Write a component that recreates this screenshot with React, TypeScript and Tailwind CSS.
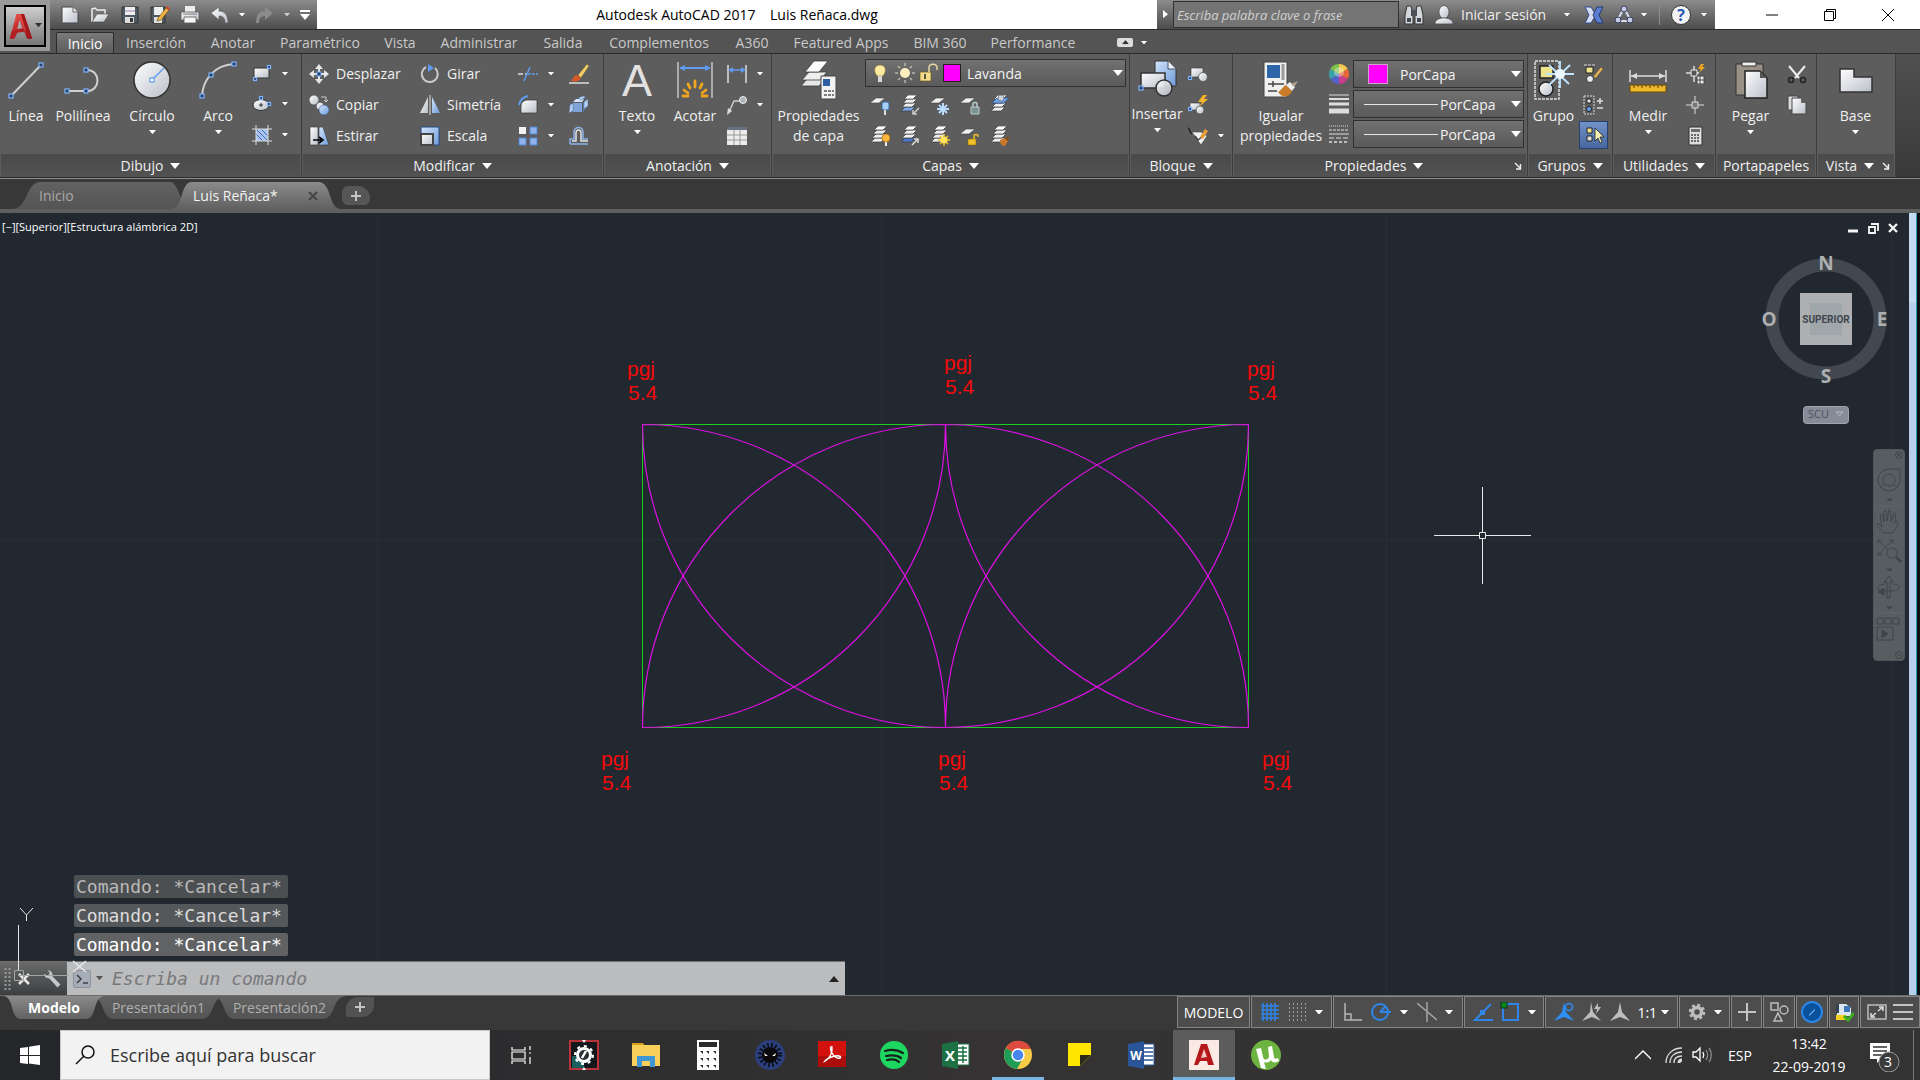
import type { ReactNode } from 'react';

interface IconProps {
  children: ReactNode;
  className?: string;
}

function Icon20({ children, className = 'size-5' }: IconProps) {
  return (
    <svg viewBox="0 0 20 20" fill="none" aria-hidden="true" className={`${className} shrink-0`}>
      {children}
    </svg>
  );
}

function Icon40({ children, className = 'size-10' }: IconProps) {
  return (
    <svg viewBox="0 0 40 40" fill="none" aria-hidden="true" className={`${className} shrink-0`}>
      {children}
    </svg>
  );
}

function Caret({ className = 'w-[7px] text-white' }: { className?: string }) {
  return (
    <svg viewBox="0 0 10 6" aria-hidden="true" className={`${className} shrink-0`}>
      <path d="M0 0h10L5 6z" fill="currentColor" />
    </svg>
  );
}

function Launcher() {
  return (
    <svg viewBox="0 0 8 8" aria-hidden="true" className="size-2 shrink-0">
      <path d="M1 1l5 5M6.500 2v5H2" fill="none" stroke="#eee" strokeWidth="1.400" />
    </svg>
  );
}

// Blue square handle used on most drawing icons
function Grip({ x, y, s = 4 }: { x: number; y: number; s?: number }) {
  return <rect x={x - s / 2} y={y - s / 2} width={s} height={s} fill="#2b3f5c" stroke="#7db2ff" strokeWidth="1.2" />;
}

function GradientDefs() {
  return (
    <svg width="0" height="0" className="absolute" aria-hidden="true">
      <defs>
        <linearGradient id="silver" x1="0" y1="0" x2="1" y2="1">
          <stop offset="0" stopColor="#ffffff" />
          <stop offset="1" stopColor="#b9bec8" />
        </linearGradient>
        <linearGradient id="blueish" x1="0" y1="0" x2="1" y2="1">
          <stop offset="0" stopColor="#d3e4fa" />
          <stop offset="1" stopColor="#6d9bdb" />
        </linearGradient>
        <linearGradient id="tabActive" x1="0" y1="0" x2="0" y2="1">
          <stop offset="0" stopColor="#8b8b8b" />
          <stop offset="1" stopColor="#616161" />
        </linearGradient>
        <linearGradient id="tabIdle" x1="0" y1="0" x2="0" y2="1">
          <stop offset="0" stopColor="#626262" />
          <stop offset="1" stopColor="#545454" />
        </linearGradient>
        <linearGradient id="redA" x1="0" y1="0" x2="1" y2="1">
          <stop offset="0" stopColor="#e8403c" />
          <stop offset="1" stopColor="#94181a" />
        </linearGradient>
      </defs>
    </svg>
  );
}

function AutocadMark({ className }: { className: string }) {
  return (
    <svg viewBox="0 0 32 36" aria-hidden="true" className={className}>
      <path d="M1 35L10 2h10l11 33h-7l-4-10-9 1-4 9z" fill="url(#redA)" />
      <path d="M14 9l4 12-7 1z" fill="#a9a9ab" />
      <path d="M1 35l3-11 17-3 3 4-13 2-4 8z" fill="#b01f22" />
      <path d="M10 2l-3 13 3-2 3-6 8 18h4l-8-23z" fill="#ee5a52" opacity=".5" />
      <path d="M16 2h4l11 33h-5z" fill="#a0181b" />
    </svg>
  );
}

/* ---------- Title bar ---------- */

function QuickAccess() {
  const btn = 'flex w-[30px] shrink-0 justify-center';
  return (
    <div className="flex h-full w-[267px] shrink-0 items-center bg-linear-to-b from-[#8c8c8c] to-[#4d4d4d] pl-[5px]">
      <button aria-label="Nuevo" className={btn}>
        <Icon20><path d="M2 2h11l5 5v11H2z" fill="url(#silver)" stroke="#444" /><path d="M13 2v5h5" fill="#eee" stroke="#666" /></Icon20>
      </button>
      <button aria-label="Abrir" className={btn}>
        <Icon20><path d="M2 17V4l3-1 2 2h8v4" stroke="#eee" strokeWidth="1.5" fill="#777" /><path d="M2 17L7 9h12l-5 8z" fill="url(#silver)" stroke="#444" strokeWidth=".6" /></Icon20>
      </button>
      <button aria-label="Guardar" className={btn}>
        <Icon20><path d="M2 2h16v16H4l-2-2z" fill="#505a64" stroke="#333" /><path d="M5 2h10v8H5z" fill="#eee" /><path d="M5 6h10" stroke="#96a" strokeWidth=".8" /><path d="M5 12h9v6H5z" fill="#ddd" /><path d="M10 13h3v4h-3z" fill="#333" /></Icon20>
      </button>
      <button aria-label="Guardar como" className={btn}>
        <Icon20><path d="M1 2h14v16H3l-2-2z" fill="#505a64" stroke="#333" /><path d="M4 2h9v8H4z" fill="#eee" /><path d="M4 12h8v6H4z" fill="#ddd" /><path d="M8 13l8-10 3 2-8 10-4 1z" fill="#f0b445" stroke="#6b4b14" strokeWidth=".6" /><path d="M16 3l3 2 1-2-3-2z" fill="#d9432f" /></Icon20>
      </button>
      <button aria-label="Trazar" className={btn}>
        <Icon20><path d="M5 1h10v6H5z" fill="#eee" /><path d="M1 7h18v8H1z" fill="url(#silver)" stroke="#555" strokeWidth=".8" /><path d="M4 12h12v6H4z" fill="#f6f6f6" stroke="#555" strokeWidth=".8" /><path d="M3 9h14" stroke="#777" /></Icon20>
      </button>
      <button aria-label="Deshacer" className={btn}>
        <Icon20><path d="M1 8l8-6v4c6 0 9 4 9 12h-3c0-5-2-7-6-7v4z" fill="url(#silver)" stroke="#555" strokeWidth=".6" /></Icon20>
      </button>
      <button aria-label="Lista deshacer" className="flex w-[14px] justify-center"><Caret className="w-[6px] text-white" /></button>
      <button aria-label="Rehacer" className={btn}>
        <Icon20><path d="M19 8l-8-6v4c-6 0-9 4-9 12h3c0-5 2-7 6-7v4z" fill="#8b8b8b" /></Icon20>
      </button>
      <button aria-label="Lista rehacer" className="flex w-4 justify-center"><Caret className="w-[6px] text-[#ccc]" /></button>
      <button aria-label="Personalizar barra" className="flex w-5 flex-col items-center justify-center gap-[2px]">
        <span className="h-[2px] w-[10px] bg-white" />
        <Caret className="w-[10px] text-white" />
      </button>
    </div>
  );
}

function InfoCenter() {
  return (
    <div className="flex h-full w-[558px] shrink-0 items-center bg-linear-to-b from-[#8c8c8c] to-[#4d4d4d]">
      <button aria-label="Contraer búsqueda" className="flex w-4 justify-center">
        <svg viewBox="0 0 6 10" className="w-[5px]"><path d="M0 0l6 5-6 5z" fill="#fff" /></svg>
      </button>
      <input
        aria-label="Buscar"
        placeholder="Escriba palabra clave o frase"
        className="h-[27px] w-[226px] border border-[#303030] bg-[#747474] px-[3px] text-[13px] italic placeholder:text-[#d0d0d0]"
      />
      <button aria-label="Buscar ayuda" className="ml-[5px]">
        <Icon20><path d="M3 1h4l2 9v9H1v-9zM13 1h4l2 9v9h-8v-9z" fill="#d4d8dc" stroke="#333" /><path d="M7 5h6v6H7z" fill="#4a4f55" /><path d="M3 13h4v4H3zM13 13h4v4h-4z" fill="#3f4a52" /></Icon20>
      </button>
      <button className="ml-[10px] flex items-center gap-[7px] text-[14px] text-[#eee]">
        <Icon20><ellipse cx="10" cy="7" rx="5" ry="6.500" fill="url(#silver)" stroke="#444" strokeWidth=".7" /><path d="M1 19c0-4 3-5 7-6h4c4 1 7 2 7 6z" fill="url(#silver)" stroke="#444" strokeWidth=".7" /></Icon20>
        <span className="w-[92px] text-left whitespace-nowrap">Iniciar sesión</span>
      </button>
      <button aria-label="Opciones de sesión" className="flex w-[27px] justify-center"><Caret className="w-[6px] text-white" /></button>
      <button aria-label="Exchange">
        <Icon20 className="ml-1 size-5"><path d="M1 2h6l5 8-5 8H1l4-8z" fill="#d5def2" stroke="#334a8c" /><path d="M19 2h-6l-4 8 4 8h6l-4-8z" fill="#5b7fd0" stroke="#22386e" /></Icon20>
      </button>
      <button aria-label="A360" className="ml-[10px] flex items-center gap-[7px]">
        <Icon20><path d="M10 3l7 13H3z" stroke="#d7dcf0" strokeWidth="2" /><circle cx="10" cy="4" r="3" fill="#c6cce0" stroke="#333c66" /><circle cx="4" cy="15" r="3" fill="#c6cce0" stroke="#333c66" /><circle cx="16" cy="15" r="3" fill="#c6cce0" stroke="#333c66" /></Icon20>
        <Caret className="w-[6px] text-white" />
      </button>
      <span className="ml-3 h-5 w-px bg-[#8d8d8d]" />
      <button aria-label="Ayuda" className="ml-[11px] flex items-center gap-[10px]">
        <span className="flex size-5 items-center justify-center rounded-full border border-[#333] bg-[#f3f3f3] text-[16px] leading-none font-bold text-[#2757b0]">?</span>
        <Caret className="w-[6px] text-white" />
      </button>
    </div>
  );
}

function WindowButtons() {
  const btn = 'flex h-full w-[58px] items-center justify-center';
  return (
    <div className="flex h-full w-[205px] shrink-0 justify-end pr-[3px]">
      <button aria-label="Minimizar" className={btn}><svg viewBox="0 0 12 12" className="size-3"><path d="M0 6h12" stroke="#000" /></svg></button>
      <button aria-label="Restaurar" className={btn}>
        <svg viewBox="0 0 12 12" className="size-3"><path d="M.5 2.500h9v9h-9zM2.500 2.500v-2h9v9h-2" fill="none" stroke="#000" /></svg>
      </button>
      <button aria-label="Cerrar" className={btn}><svg viewBox="0 0 12 12" className="size-3"><path d="M0 0l12 12M12 0L0 12" stroke="#000" /></svg></button>
    </div>
  );
}

const RIBBON_TABS = [
  { label: 'Inserción', width: 'w-[84px]' },
  { label: 'Anotar', width: 'w-[70px]' },
  { label: 'Paramétrico', width: 'w-[104px]' },
  { label: 'Vista', width: 'w-[56px]' },
  { label: 'Administrar', width: 'w-[102px]' },
  { label: 'Salida', width: 'w-[66px]' },
  { label: 'Complementos', width: 'w-[126px]' },
  { label: 'A360', width: 'w-[60px]' },
  { label: 'Featured Apps', width: 'w-[118px]' },
  { label: 'BIM 360', width: 'w-[80px]' },
  { label: 'Performance', width: 'w-[106px]' },
];

function Header() {
  return (
    <header className="flex border-b border-[#2b2b2b] bg-[#545454]">
      <button aria-label="Menú de la aplicación" className="flex h-[51px] w-[50px] shrink-0 items-center justify-center bg-[#9a9a9a]">
        <span className="flex h-[42px] w-[42px] items-center gap-[2px] border-2 border-black bg-linear-to-b from-[#cfcfcf] to-[#777] pl-[3px]">
          <AutocadMark className="h-7 w-6" />
          <Caret className="w-[7px] text-[#333]" />
        </span>
      </button>
      <div className="min-w-0 flex-1">
        <div className="flex h-[30px] border-b border-[#2b2b2b] bg-white">
          <QuickAccess />
          <h1 className="flex-1 text-center text-[14px] leading-[29px] whitespace-pre text-black">
            {'Autodesk AutoCAD 2017    Luis Reñaca.dwg'}
          </h1>
          <InfoCenter />
          <WindowButtons />
        </div>
        <nav className="flex h-[23px] items-end pl-[6px] text-[14px] text-[#c9c9c9]">
          <button className="h-[21px] w-[58px] rounded-t-xs border border-b-0 border-[#2b2b2b] bg-linear-to-b from-[#7a7a7a] to-[#5c5c5c] leading-[19px] text-white">
            Inicio
          </button>
          {RIBBON_TABS.map((tab) => (
            <button key={tab.label} className={`${tab.width} h-[21px] leading-[20px] whitespace-nowrap`}>{tab.label}</button>
          ))}
          <button aria-label="Minimizar cinta" className="ml-[31px] flex h-[21px] items-center">
            <span className="flex h-[9px] w-4 items-center justify-center rounded-xs bg-[#dcdcdc]">
              <Caret className="w-[7px] rotate-180 text-[#333]" />
            </span>
          </button>
          <button aria-label="Opciones de cinta" className="ml-2 flex h-[21px] items-center"><Caret className="w-[6px] text-white" /></button>
        </nav>
      </div>
    </header>
  );
}

/* ---------- Ribbon ---------- */

interface PanelProps {
  title: string;
  width: string;
  arrow?: boolean;
  launcher?: boolean;
  children: ReactNode;
}

function Panel({ title, width, arrow = true, launcher = false, children }: PanelProps) {
  return (
    <section className={`${width} flex shrink-0 flex-col border-r border-[#3c3c3c] bg-[#5d5d5d]`}>
      <div className="flex h-[100px] py-1">{children}</div>
      <div className="flex h-[23px] items-center justify-center border-x border-[#5d5d5d] bg-linear-to-b from-[#4a4a4a] to-[#525252] text-[14px] text-[#f0f0f0]">
        <button className="flex flex-1 items-center justify-center gap-[7px]">
          {title}
          {arrow && <Caret className="w-[10px] text-white" />}
        </button>
        {launcher && <button aria-label={`Opciones de ${title}`} className="mr-1"><Launcher /></button>}
      </div>
    </section>
  );
}

interface BigButtonProps {
  icon: ReactNode;
  label: string;
  width: string;
  arrow?: boolean;
}

function BigButton({ icon, label, width, arrow = false }: BigButtonProps) {
  return (
    <button className={`${width} flex shrink-0 flex-col items-center pt-[2px] text-[14px] leading-[20px] text-[#f0f0f0]`}>
      {icon}
      <span className="mt-[6px] whitespace-pre-line">{label}</span>
      {arrow && <Caret className="mt-1 w-[7px] text-white" />}
    </button>
  );
}

interface SmallButtonProps {
  icon: ReactNode;
  name: string;
  text?: boolean;
  arrow?: boolean;
}

function SmallButton({ icon, name, text = false, arrow = false }: SmallButtonProps) {
  return (
    <button aria-label={name} className="flex h-[31px] items-center text-[14px] whitespace-nowrap text-[#f0f0f0]">
      {icon}
      {text && <span className="ml-[7px]">{name}</span>}
      {arrow && <Caret className="ml-[10px] w-[6px] text-white" />}
    </button>
  );
}

function DrawPanel() {
  return (
    <Panel title="Dibujo" width="w-[302px]">
      <BigButton width="w-[52px]" label="Línea" icon={<Icon40><path d="M5 36L35 5" stroke="#cfcfcf" strokeWidth="2" /><Grip x={5} y={36} /><Grip x={35} y={5} /></Icon40>} />
      <BigButton width="w-[62px]" label="Polilínea" icon={<Icon40><path d="M4 31h20c14 0 14-21 0-21" stroke="#cfcfcf" strokeWidth="2" /><Grip x={4} y={31} /><Grip x={23} y={31} /><Grip x={23} y={10} /></Icon40>} />
      <BigButton width="w-[76px]" label="Círculo" arrow icon={<Icon40><circle cx="20" cy="20" r="18" fill="url(#silver)" stroke="#333" strokeWidth="1.500" /><path d="M20 20L32 8" stroke="#5f9bf0" strokeWidth="1.500" /><rect x="18" y="18" width="4" height="4" fill="#fff" stroke="#5f9bf0" strokeWidth="1.200" /></Icon40>} />
      <BigButton width="w-[56px]" label="Arco" arrow icon={<Icon40><path d="M4 36C5 20 16 5 36 4" stroke="#cfcfcf" strokeWidth="2" /><Grip x={4} y={36} /><Grip x={13} y={15} /><Grip x={36} y={4} /></Icon40>} />
      <div className="ml-[6px] flex flex-col">
        <SmallButton name="Rectángulo" arrow icon={<Icon20><path d="M2 5h15v10H2z" fill="url(#silver)" stroke="#333" /><Grip x={17} y={4} s={3} /><Grip x={3} y={16} s={3} /></Icon20>} />
        <SmallButton name="Elipse" arrow icon={<Icon20><ellipse cx="9" cy="11" rx="8" ry="5.500" fill="url(#silver)" stroke="#333" /><path d="M9 9v4M7 11h4" stroke="#333" /><Grip x={9} y={4} s={3} /><Grip x={17} y={10} s={3} /></Icon20>} />
        <SmallButton name="Sombreado" arrow icon={<Icon20><path d="M4 4h12v12H4z" fill="#a9c4ee" /><path d="M4 9l7 7M4 4l12 12M9 4l7 7" stroke="#3f69b8" /><path d="M4 0v20M16 0v20M0 4h20M0 16h20" stroke="#ddd" /></Icon20>} />
      </div>
    </Panel>
  );
}

function ModifyPanel() {
  return (
    <Panel title="Modificar" width="w-[302px]">
      <div className="ml-[7px] w-[111px]">
        <SmallButton name="Desplazar" text icon={<Icon20><path d="M10 0l4 5h-8zM10 20l4-5h-8zM0 10l5-4v8zM20 10l-5-4v8z" fill="#e5e5e5" /><path d="M10 4v12M4 10h12" stroke="#e5e5e5" strokeWidth="2" /><rect x="8" y="8" width="4" height="4" fill="#24436f" stroke="#7db2ff" /></Icon20>} />
        <SmallButton name="Copiar" text icon={<Icon20><circle cx="5" cy="5" r="4.500" fill="url(#silver)" /><circle cx="11" cy="11" r="4" fill="#e4e8ee" stroke="#5d5d5d" /><circle cx="15" cy="15" r="5" fill="url(#blueish)" stroke="#3a5a8c" strokeWidth=".6" /><path d="M12 2h5v4M15 5l2 2 2-2" stroke="#ccc" /></Icon20>} />
        <SmallButton name="Estirar" text icon={<Icon20><path d="M1 1h8v18H1z" fill="url(#silver)" stroke="#333" strokeWidth=".6" /><path d="M10 1h4l6 18H10z" fill="url(#blueish)" stroke="#333" strokeWidth=".6" /><path d="M4 14h8M10 11l4 3-4 3" stroke="#000" strokeWidth="1.600" /></Icon20>} />
      </div>
      <div className="w-[98px]">
        <SmallButton name="Girar" text icon={<Icon20><path d="M6 3a8 8 0 1 0 9 1" stroke="#c9c9c9" strokeWidth="2" /><path d="M8 0l6 4-6 4z" fill="#5f9bf0" /></Icon20>} />
        <SmallButton name="Simetría" text icon={<Icon20><path d="M8 2v16H0z" fill="url(#silver)" /><path d="M12 2v16h8z" fill="url(#blueish)" /><path d="M10 0v20" stroke="#ddd" /></Icon20>} />
        <SmallButton name="Escala" text icon={<Icon20><path d="M1 1h18v18H1z" fill="url(#blueish)" stroke="#274a86" /><path d="M1 8h12v11H1z" fill="url(#silver)" stroke="#444" strokeWidth="2" /></Icon20>} />
      </div>
      <div className="w-[51px]">
        <SmallButton name="Recortar" arrow icon={<Icon20><path d="M0 10h5M7 10h2" stroke="#ddd" strokeWidth="1.500" /><path d="M10 10h10" stroke="#5f9bf0" strokeWidth="1.500" strokeDasharray="3 1" /><path d="M6 17L12 3" stroke="#5f9bf0" strokeWidth="1.500" /></Icon20>} />
        <SmallButton name="Empalme" arrow icon={<Icon20><path d="M3 18v-6c0-5 3-7 7-7h9v13z" fill="url(#silver)" stroke="#333" strokeWidth=".7" /><path d="M1 10c1-5 4-8 9-9" stroke="#5f9bf0" strokeWidth="2" /></Icon20>} />
        <SmallButton name="Matriz" arrow icon={<Icon20><path d="M1 1h7v7H1z" fill="#f3f3f3" /><path d="M12 1h7v7h-7zM1 12h7v7H1zM12 12h7v7h-7z" fill="#8db3ea" stroke="#5585cc" /></Icon20>} />
      </div>
      <div>
        <SmallButton name="Borrar" icon={<Icon20><path d="M0 19h20" stroke="#ddd" strokeWidth="1.500" /><path d="M9 11L18 0l2 2-8 12z" fill="#f2cf66" stroke="#553" strokeWidth=".5" /><path d="M2 17c2-1 2-6 6-6l4 3c-2 4-6 4-10 3z" fill="#d45a28" /></Icon20>} />
        <SmallButton name="Descomponer" icon={<Icon20><path d="M4 7l3-3h8l-2 3z" fill="#d3e4fa" /><path d="M4 8h9v9H4z" fill="#7ea3d8" /><path d="M14 8l3-3v8l-3 4z" fill="#5b7fb5" /><path d="M1 10l3-2v8l-4 2zM9 3l5-2 3 1-5 3zM15 7l4-3v7l-4 3z" fill="#b7d2f7" stroke="#47618a" strokeWidth=".5" /></Icon20>} />
        <SmallButton name="Desfase" icon={<Icon20><path d="M1 18v-5h4V6c0-6 9-6 9 0v7h5" stroke="#8db3ea" strokeWidth="1.500" /><path d="M1 18h18" stroke="#8db3ea" strokeWidth="1.500" /><path d="M3 15h4V7c0-4 5-4 5 0v8h7" stroke="#e4e4e4" strokeWidth="1.500" /></Icon20>} />
      </div>
    </Panel>
  );
}

function AnnotationPanel() {
  return (
    <Panel title="Anotación" width="w-[168px]">
      <BigButton width="w-[66px]" label="Texto" arrow icon={<Icon40 className="size-10 overflow-visible"><text x="20" y="36" textAnchor="middle" fontSize="45" fill="#e2e2e2" className="font-['Liberation_Sans',Arial,sans-serif]">A</text></Icon40>} />
      <BigButton width="w-[50px]" label="Acotar" icon={<Icon40><path d="M3 2v36M37 2v36" stroke="#c5c5c5" strokeWidth="1.500" /><path d="M5 8h30" stroke="#5f9bf0" strokeWidth="2" /><path d="M4 8l6-3v6zM36 8l-6-3v6z" fill="#5f9bf0" /><path d="M20 21v6M13 24l2 4M27 24l-2 4M9 30l4 3M31 30l-4 3M8 36h5M27 36h5" stroke="#f0a51e" strokeWidth="2.800" strokeLinecap="round" /></Icon40>} />
      <div className="ml-[7px]">
        <SmallButton name="Cota lineal" arrow icon={<Icon20><path d="M1 1v18M19 1v18" stroke="#ddd" strokeWidth="1.500" /><path d="M3 6h14" stroke="#5f9bf0" strokeWidth="1.500" /><path d="M1 6l5-3v6zM19 6l-5-3v6z" fill="#5f9bf0" /></Icon20>} />
        <SmallButton name="Directriz" arrow icon={<Icon20><path d="M2 17l5-11h6" stroke="#ccc" strokeWidth="1.500" /><circle cx="16" cy="5" r="3.500" fill="#aeb4bb" stroke="#eee" /><path d="M0 20l1-7 4 3z" fill="#ddd" /></Icon20>} />
        <SmallButton name="Tabla" icon={<Icon20><path d="M0 1h20v18H0z" fill="#ececec" /><path d="M0 1h20v3H0z" fill="#66727f" /><path d="M0 9h20M0 14h20M7 4v15M13 4v15" stroke="#9a9a9a" /></Icon20>} />
      </div>
    </Panel>
  );
}

function Stack({ tint = '#eeeeee' }: { tint?: string }) {
  return (
    <g stroke="#3d3d3d" strokeWidth=".7">
      <path d="M1 16l4-4h10l-4 4z" fill={tint} />
      <path d="M2 12l4-4h10l-4 4z" fill="#eee" />
      <path d="M3 8l4-4h10l-4 4z" fill="#eee" />
      <path d="M4 4l4-4h9l-4 4z" fill="#fff" />
    </g>
  );
}

function Sheet() {
  return <path d="M0 8l6-5h9l-6 5z" fill="#f0f0f0" stroke="#444" strokeWidth=".6" />;
}

const LAYER_TOOLS: { name: string; art: ReactNode }[] = [
  { name: 'Desactivar', art: <><Sheet /><rect x="12" y="7" width="7" height="8" rx="2" fill="#a9d1f7" stroke="#3a6ba8" /><path d="M15 15v5" stroke="#ddd" strokeWidth="2" /></> },
  { name: 'Aislar', art: <><Stack tint="#7ba7ea" /><path d="M19 13l-6 6M13 15v4h4" stroke="#ccc" strokeWidth="1.500" /></> },
  { name: 'Inutilizar', art: <><Sheet /><path d="M13 8v12M7 14h12M9 10l8 8M17 10l-8 8" stroke="#bcdcff" strokeWidth="2" /></> },
  { name: 'Bloquear', art: <><Sheet /><path d="M11 12h8v7h-8z" fill="#7c9293" stroke="#b9cccc" /><path d="M13 12V9c0-2 4-2 4 0v3" stroke="#b9cccc" strokeWidth="1.500" /></> },
  { name: 'Establecer actual', art: <><Stack /><path d="M2 8l5-5h12l-5 5z" fill="#6ea1ea" stroke="#264b86" strokeWidth=".6" /><circle cx="11" cy="3" r="3" fill="#ccd4dc" stroke="#555" strokeWidth=".6" /></> },
  { name: 'Activar todas', art: <><Stack /><circle cx="16" cy="12" r="4" fill="#ffb93a" stroke="#a05a00" strokeWidth=".6" /><path d="M16 16v4" stroke="#eee" strokeWidth="2" /></> },
  { name: 'Desaislar', art: <><Stack tint="#4a79cc" /><path d="M12 19l6-6M14 13h4v4" stroke="#ddd" strokeWidth="1.500" /></> },
  { name: 'Reutilizar todas', art: <><Stack /><path d="M14 8v12M8 14h12M10 10l8 8M18 10l-8 8" stroke="#f2c21e" strokeWidth="1.500" /><circle cx="14" cy="14" r="3.500" fill="#ffe25a" /></> },
  { name: 'Desbloquear', art: <><Sheet /><path d="M8 13h8v6H8z" fill="#f0c02c" stroke="#8a6400" strokeWidth=".6" /><path d="M14 13v-3c0-2 4-2 4 0v1" stroke="#f0c02c" strokeWidth="1.500" /></> },
  { name: 'Igualar capa', art: <><Stack /><path d="M10 14l5-2 3 3-3 5c-3 0-5-2-5-6z" fill="#c9762b" /><path d="M15 12l4-2-1 5z" fill="#7d4a1c" /></> },
];

function LayersPanel() {
  return (
    <Panel title="Capas" width="w-[358px]">
      <BigButton
        width="w-[93px]"
        label={'Propiedades\nde capa'}
        icon={
          <Icon40>
            <g stroke="#3d3d3d" strokeWidth=".8">
              <path d="M2 26l7-8h18l-7 8z" fill="#e8e8e8" /><path d="M3 20l7-8h18l-7 8z" fill="#eee" /><path d="M6 12l9-11h14l-9 11z" fill="#fff" />
            </g>
            <path d="M22 16h15v23H22z" fill="#f2f2f2" stroke="#444" /><path d="M24 19h7v7h-7z" fill="#2e5fa6" /><path d="M25 31h10M25 35h10" stroke="#555" strokeWidth="1.500" strokeDasharray="3 1" />
          </Icon40>
        }
      />
      <div className="min-w-0 flex-1 pr-[3px]">
        <div className="mt-[1px] flex h-7 items-center border border-[#303030] bg-linear-to-b from-[#717171] to-[#5a5a5a] pl-1">
          <Icon20 className="mr-[5px] size-5"><path d="M7 13C3 8 4 2 10 2s7 6 3 11z" fill="#fbe9a0" stroke="#7a6a2a" strokeWidth=".6" /><path d="M8 13h4v6H8z" fill="#d8d8d8" /></Icon20>
          <Icon20 className="mr-[3px] size-5"><path d="M10 0v20M0 10h20M3 3l14 14M17 3L3 17" stroke="#b6b6a6" strokeWidth="1.500" strokeDasharray="3 14" /><circle cx="10" cy="10" r="5" fill="#fbeec0" /></Icon20>
          <Icon20 className="mr-[5px] size-5"><path d="M2 9h11v9H2z" fill="#f3dc8a" stroke="#6c5a20" strokeWidth=".7" /><path d="M11 9V5c0-5 8-5 8 0v2" stroke="#e6d9a2" strokeWidth="1.500" /><path d="M7 11v5" stroke="#554" strokeWidth="2" /></Icon20>
          <span className="size-[18px] shrink-0 border border-[#222] bg-[#ff00ff]" />
          <select aria-label="Capa actual" className="ml-[6px] flex-1 appearance-none bg-transparent text-[14px] text-[#f3f3f3]">
            <option>Lavanda</option>
          </select>
          <Caret className="mr-[2px] w-[10px] text-white" />
        </div>
        <div className="mt-[2px] grid w-[155px] grid-cols-5 pl-[5px]">
          {LAYER_TOOLS.map((tool) => (
            <SmallButton key={tool.name} name={tool.name} icon={<Icon20>{tool.art}</Icon20>} />
          ))}
        </div>
      </div>
    </Panel>
  );
}

function BlockPanel() {
  return (
    <Panel title="Bloque" width="w-[103px]">
      <BigButton width="w-[54px]" label="Insertar" arrow icon={<Icon40 className="-mb-[2px] size-10"><path d="M18 1h13l8 8v17H18z" fill="url(#blueish)" stroke="#333" /><path d="M31 1v8h8" fill="#eef4ff" stroke="#456" /><path d="M4 13h24v15H4z" fill="url(#silver)" stroke="#333" strokeWidth="1.500" /><circle cx="27" cy="28" r="8" fill="url(#silver)" stroke="#333" strokeWidth="1.500" fillOpacity=".9" /><Grip x={4} y={28} /></Icon40>} />
      <div className="ml-[4px]">
        <SmallButton name="Crear bloque" icon={<Icon20><path d="M3 4h12v9H3z" fill="url(#silver)" stroke="#444" strokeWidth=".7" /><circle cx="15" cy="13" r="4.500" fill="url(#silver)" stroke="#444" strokeWidth=".7" /><Grip x={2} y={14} s={3} /></Icon20>} />
        <SmallButton name="Editar bloque" icon={<Icon20><path d="M2 8h10v7H2z" fill="url(#silver)" stroke="#444" strokeWidth=".7" /><circle cx="12" cy="15" r="4" fill="url(#silver)" stroke="#444" strokeWidth=".7" /><path d="M15 0l-5 7h4l-3 5 9-8h-4l3-4z" fill="#f6b32c" /><Grip x={2} y={14} s={3} /></Icon20>} />
        <SmallButton name="Atributos" arrow icon={<Icon20><path d="M0 2c2 0 1 5 4 6" stroke="#222" strokeWidth="1.500" /><path d="M4 6l9 13 6-9-6-4z" fill="#efefef" stroke="#444" strokeWidth=".6" /><path d="M7 10l3 4 4-3" stroke="#444" strokeWidth="1.500" /><path d="M12 11l5-8 3 2-5 8z" fill="#e59a3b" /></Icon20>} />
      </div>
    </Panel>
  );
}

interface ComboProps {
  label: string;
  swatch?: boolean;
}

function PropertyCombo({ label, swatch = false }: ComboProps) {
  return (
    <div className="flex h-[28px] items-center border border-[#303030] bg-linear-to-b from-[#717171] to-[#5a5a5a] pr-[2px]">
      {swatch ? (
        <span className="mr-3 ml-[14px] size-5 shrink-0 border border-[#c9a6c9] bg-[#ff00ff]" />
      ) : (
        <span className="mr-[2px] ml-[10px] h-px w-[74px] shrink-0 bg-[#e6e6e6]" />
      )}
      <select aria-label={label} className="min-w-0 flex-1 appearance-none bg-transparent text-[14px] text-[#f3f3f3]">
        <option>PorCapa</option>
      </select>
      <Caret className="w-[10px] text-white" />
    </div>
  );
}

function PropertiesPanel() {
  return (
    <Panel title="Propiedades" width="w-[295px]" launcher>
      <BigButton width="w-[96px]" label={'Igualar\npropiedades'} icon={<Icon40><path d="M3 2h23v35H3z" fill="#f0f0f0" stroke="#444" /><path d="M6 5h13v13H6z" fill="#2c66a8" /><path d="M22 4v16" stroke="#999" strokeWidth="3" /><path d="M7 24h16M7 31h9M12 21v6" stroke="#444" strokeWidth="1.500" /><path d="M17 32c3-1 5-6 8-7l6 6c-2 6-9 8-14 1z" fill="#c77c25" /><path d="M25 25l6 6 3-4-5-5z" fill="#eee" /><path d="M30 24l7-3-4 6z" fill="#b5a58e" /></Icon40>} />
      <div className="flex w-[24px] shrink-0 flex-col gap-[2px] pt-[2px]">
        <span className="flex h-7 items-center">
          <svg viewBox="0 0 20 20" className="size-5" aria-hidden="true">
            <path d="M10 10V0A10 10 0 0 1 18.700 5z" fill="#f2c84b" /><path d="M10 10l8.700-5a10 10 0 0 1 0 10z" fill="#e8673a" /><path d="M10 10l8.700 5A10 10 0 0 1 10 20z" fill="#c93d8e" />
            <path d="M10 10v10a10 10 0 0 1-8.700-5z" fill="#5562c9" /><path d="M10 10l-8.700 5a10 10 0 0 1 0-10z" fill="#3aa3a5" /><path d="M10 10L1.300 5A10 10 0 0 1 10 0z" fill="#7cc04a" />
            <circle cx="10" cy="8" r="5" fill="#fff" opacity=".35" />
          </svg>
        </span>
        <span className="flex h-7 items-center"><Icon20><path d="M0 1h20" stroke="#ddd" /><path d="M0 5h20" stroke="#ddd" strokeWidth="2" /><path d="M0 10h20" stroke="#ddd" strokeWidth="3" /><path d="M0 17h20" stroke="#ddd" strokeWidth="5" /></Icon20></span>
        <span className="flex h-7 items-center"><Icon20><path d="M0 2h20" stroke="#ddd" strokeDasharray="1 1" /><path d="M0 6h20" stroke="#ddd" strokeDasharray="3 1" /><path d="M0 10h20" stroke="#ddd" /><path d="M0 14h20" stroke="#ddd" strokeDasharray="5 2" /><path d="M0 18h20" stroke="#ddd" strokeWidth="1.500" strokeDasharray="3 2" /></Icon20></span>
      </div>
      <div className="flex min-w-0 flex-1 flex-col gap-[2px] pt-[2px] pr-[3px]">
        <PropertyCombo label="Color de objeto" swatch />
        <PropertyCombo label="Grosor de línea" />
        <PropertyCombo label="Tipo de línea" />
      </div>
    </Panel>
  );
}

function GroupsPanel() {
  return (
    <Panel title="Grupos" width="w-[85px]">
      <BigButton width="w-[51px]" label="Grupo" icon={<Icon40><path d="M1 1h24v38H1z" stroke="#ddd" strokeWidth="1.500" strokeDasharray="3 1" /><path d="M6 6h13v12H6z" fill="#efe38c" stroke="#222" strokeWidth="1.500" /><circle cx="12" cy="29" r="7" fill="url(#silver)" stroke="#222" strokeWidth="1.500" /><path d="M26 1v27M12 14h28M15 5l20 19M36 5L15 25" stroke="#bfe4ff" strokeWidth="1.800" /><circle cx="26" cy="14" r="5" fill="#eaf7ff" /></Icon40>} />
      <div>
        <div className="pl-1">
          <SmallButton name="Editar grupo" icon={<Icon20><path d="M1 1h12" stroke="#ddd" strokeDasharray="3 1" /><path d="M3 3h7v6H3z" fill="#efe38c" stroke="#222" /><circle cx="7" cy="15" r="3.500" fill="#e8edf2" stroke="#333" /><path d="M10 13l8-10 2 2-7 9z" fill="#e6b45a" stroke="#543" strokeWidth=".5" /></Icon20>} />
          <SmallButton name="Añadir al grupo" icon={<Icon20><path d="M1 1h10v18H1z" stroke="#ddd" strokeDasharray="2 1" /><path d="M4 4h4v4H4z" fill="#eee" stroke="#222" /><circle cx="6" cy="14" r="2.500" fill="#6ea1ea" stroke="#222" /><path d="M14 6h6M17 3v6M14 13h6" stroke="#ddd" strokeWidth="1.500" /></Icon20>} />
        </div>
        <button aria-label="Selección de grupo" className="mt-[1px] flex h-7 w-[29px] items-center justify-center border border-[#26416e] bg-linear-to-b from-[#7293c8] to-[#4767a0]">
          <Icon20><path d="M3 3h5v5H3z" fill="#efe38c" stroke="#222" /><path d="M3 11h5v5H3z" fill="#ddd" stroke="#222" /><path d="M11 3v13l3-3 2 5 2-1-2-5h4z" fill="#f6efb4" stroke="#222" strokeWidth=".8" /></Icon20>
        </button>
      </div>
    </Panel>
  );
}

function RightPanels() {
  return (
    <>
      <Panel title="Utilidades" width="w-[103px]">
        <BigButton width="w-[70px]" label="Medir" arrow icon={<Icon40><path d="M2 10v12M38 10v12" stroke="#ddd" strokeWidth="1.500" /><path d="M3 16h34" stroke="#ddd" strokeWidth="1.500" /><path d="M3 16l6-3v6zM37 16l-6-3v6z" fill="#ddd" /><path d="M2 25h36v7H2z" fill="#efb92e" stroke="#6b4a08" /><path d="M6 25v3M10 25v2M14 25v3M18 25v2M22 25v3M26 25v2M30 25v3M34 25v2" stroke="#5a3f08" /></Icon40>} />
        <div className="ml-[2px]">
          <SmallButton name="Selección rápida" icon={<Icon20><path d="M9 2v16M1 9h13" stroke="#ddd" strokeWidth="1.500" /><path d="M6 6h6v6H6z" fill="#555" stroke="#eee" /><path d="M12 12h7v8h-7z" fill="#eee" stroke="#444" /><path d="M15 12v8M12 16h7" stroke="#444" /><path d="M16 0l-3 5h3l-2 4 6-6h-3l2-3z" fill="#f6a81c" /></Icon20>} />
          <SmallButton name="Punto" icon={<Icon20><path d="M10 1v18M1 10h18" stroke="#ddd" /><path d="M7 7h6v6H7z" fill="#777" stroke="#ddd" /></Icon20>} />
          <SmallButton name="Calculadora" icon={<Icon20><path d="M4 1h13v18H4z" fill="#ddd" stroke="#333" /><path d="M6 3h9v3H6z" fill="#6b6b6b" /><path d="M6 9h9M6 12h9M6 15h9" stroke="#444" strokeWidth="1.500" strokeDasharray="2 1" /></Icon20>} />
        </div>
      </Panel>
      <Panel title="Portapapeles" width="w-[101px]" arrow={false}>
        <BigButton width="w-[69px]" label="Pegar" arrow icon={<Icon40><path d="M5 4h27v31H5z" fill="#9a9186" stroke="#333" /><path d="M11 2h14v4H11z" fill="#eee" stroke="#333" /><path d="M14 11h15l7 7v20H14z" fill="url(#silver)" stroke="#222" strokeWidth="1.500" /><path d="M29 11v7h7" fill="#555" /></Icon40>} />
        <div className="ml-[2px]">
          <SmallButton name="Cortar" icon={<Icon20><path d="M2 2l10 12M18 2L8 14" stroke="#ececec" strokeWidth="2" /><circle cx="4" cy="16" r="2.500" stroke="#222" strokeWidth="1.600" /><circle cx="16" cy="16" r="2.500" stroke="#222" strokeWidth="1.600" /></Icon20>} />
          <SmallButton name="Copiar al portapapeles" icon={<Icon20><path d="M1 1h10v14H1z" fill="#ddd" stroke="#444" /><path d="M5 3h9l5 5v11H5z" fill="url(#silver)" stroke="#444" /><path d="M14 3v5h5" fill="#666" /></Icon20>} />
        </div>
      </Panel>
      <Panel title="Vista" width="w-[79px]" launcher>
        <BigButton width="w-[77px]" label="Base" arrow icon={<Icon40><path d="M4 9h14v8h18v15H4z" fill="url(#silver)" stroke="#333" strokeWidth="1.500" /></Icon40>} />
      </Panel>
    </>
  );
}

/* ---------- File tabs ---------- */

function FileTabs() {
  return (
    <div className="flex h-[35px] items-end border-t border-b-4 border-t-[#8d8d8d] border-b-[#5f5f5f] bg-[#383838] pl-3 text-[14px]">
      <button className="relative h-[27px] w-[176px] pl-[27px] text-left text-[#a9a9a9]">
        <svg viewBox="0 0 176 27" preserveAspectRatio="none" className="absolute inset-0 size-full" aria-hidden="true">
          <path d="M0 27C16 27 14 0 28 0H158C166 0 168 20 176 27z" fill="url(#tabIdle)" />
        </svg>
        <span className="relative">Inicio</span>
      </button>
      <div className="relative -ml-[16px] flex h-[27px] w-[168px] items-center pl-[21px] text-[#f3f3f3]">
        <svg viewBox="0 0 168 27" preserveAspectRatio="none" className="absolute inset-0 size-full" aria-hidden="true">
          <path d="M0 27C12 25 8 0 20 0H146C160 0 156 25 168 27z" fill="url(#tabActive)" />
        </svg>
        <button className="relative w-[115px] text-left">Luis Reñaca*</button>
        <button aria-label="Cerrar dibujo" className="relative">
          <svg viewBox="0 0 10 10" className="size-[10px]"><path d="M1 1l8 8M9 1L1 9" stroke="#464646" strokeWidth="2" /></svg>
        </button>
      </div>
      <button aria-label="Nuevo dibujo" className="mb-1 ml-[2px] flex h-[19px] w-[28px] items-center justify-center rounded-tl-md rounded-tr-xl rounded-b-md bg-[#565656]">
        <svg viewBox="0 0 10 10" className="size-[10px]"><path d="M5 0v10M0 5h10" stroke="#c4c4c4" strokeWidth="2" /></svg>
      </button>
    </div>
  );
}

/* ---------- Drawing area ---------- */

const NOTES = [
  { x: 627, y: 376 },
  { x: 944, y: 370 },
  { x: 1247, y: 376 },
  { x: 601, y: 766 },
  { x: 938, y: 766 },
  { x: 1262, y: 766 },
];

const R = 303;
const TOP = 424.5;
const BOTTOM = TOP + R;

function tileArcs(x: number) {
  const right = x + R;
  return [
    `M${x} ${TOP}A${R} ${R} 0 0 1 ${right} ${BOTTOM}`,
    `M${x} ${BOTTOM}A${R} ${R} 0 0 1 ${right} ${TOP}`,
    `M${x} ${TOP}A${R} ${R} 0 0 0 ${right} ${BOTTOM}`,
    `M${x} ${BOTTOM}A${R} ${R} 0 0 0 ${right} ${TOP}`,
  ].join('');
}

function Drawing() {
  return (
    <svg viewBox="0 213 1909 782" preserveAspectRatio="xMinYMin meet" className="absolute inset-0 size-full" fill="none">
      <path d="M377.500 213V995M881.500 213V995M1386.500 213V995M1891.500 213V995M0 539.500H1909" stroke="#262e37" />
      <rect x="642.5" y="424.5" width="606" height="303" stroke="#1ad01e" />
      <path d={tileArcs(642.5) + tileArcs(945.5)} stroke="#dc10e2" strokeWidth="1.2" />
      {NOTES.map((note) => (
        <text key={`${note.x}-${note.y}`} fill="#f40a0a" fontSize="21" className="font-['Liberation_Sans',Arial,sans-serif]">
          <tspan x={note.x} y={note.y}>pgj</tspan>
          <tspan x={note.x + 1} y={note.y + 24}>5.4</tspan>
        </text>
      ))}
      <path d="M1434 535.500h45M1486 535.500h45M1482.500 487v45M1482.500 539v45M1479.500 532.500h6v6h-6z" stroke="#e8e8e8" />
    </svg>
  );
}

function ViewCube() {
  return (
    <svg viewBox="1750 240 150 190" className="absolute top-[27px] right-[9px] h-[190px] w-[150px]" fill="none">
      <circle cx="1826" cy="319" r="54" stroke="#42484f" strokeWidth="13" />
      <rect x="1800" y="293" width="52" height="52" fill="#adafb0" />
      <rect x="1810" y="303" width="32" height="32" fill="#a0a7ab" />
      <text x="1826" y="323" textAnchor="middle" fontSize="10" fontWeight="700" fill="#3f464d" className="font-[Roboto,sans-serif]">SUPERIOR</text>
      <g textAnchor="middle" fontSize="19" fontWeight="700" fill="#acaeb0">
        <text x="1826" y="270">N</text>
        <text x="1826" y="383">S</text>
        <text x="1769" y="326">O</text>
        <text x="1882" y="326">E</text>
      </g>
      <rect x="1803.5" y="406.5" width="45" height="17" rx="3" fill="#868b98" stroke="#a0a4ae" />
      <text x="1808" y="418" fontSize="11" fill="#4b505b">SCU</text>
      <path d="M1836 412h7l-3.500 4z" stroke="#b9bcc6" />
    </svg>
  );
}

function NavBar() {
  return (
    <div className="absolute top-[236px] right-1 h-[212px] w-8 rounded-sm border border-[#50565b] bg-[#585d61]">
      <svg viewBox="0 0 30 210" fill="none" stroke="#3f4549" className="size-full" strokeWidth="1">
        <circle cx="25" cy="5" r="3.5" /><path d="M23 3l4 4M27 3l-4 4" />
        <path d="M15 19h11v11a11 11 0 1 1-11-11z" /><circle cx="15" cy="30" r="6" /><path d="M11 34l-4 3M19 34l4 3" />
        <path d="M13 49h5l-2.500 2z" fill="#3f4549" />
        <path d="M2 56h26" stroke="#62676b" />
        <path d="M9 83c-2-4-6-6-6-9 2-1 4 2 5 3L6 65c2-2 3 0 4 7V61c2-1 3 0 3 10l2-11c2 0 2 2 2 12l3-9c3 0 1 6 0 10l3-2c3 0-1 9-5 12z" />
        <path d="M4 90l15 15M19 90L4 105M4 94v-4h4M15 90h4v4M4 101v4h4" /><circle cx="18" cy="103" r="5" fill="#585d61" /><path d="M22 107l5 5" strokeWidth="2.500" />
        <path d="M13 119h5l-2.500 2z" fill="#3f4549" />
        <path d="M13 148v-16h-3l5-6 4 6h-3v16z" /><path d="M11 134c-9 1-10 5-2 7h11c8-2 7-6-1-7" /><path d="M4 142l6-4v7z" fill="#3f4549" />
        <path d="M13 157h5l-2.500 2z" fill="#3f4549" />
        <path d="M2 163h26" stroke="#62676b" />
        <path d="M3 168h6v6H3zM11 168h6v6h-6zM19 168h6v6h-6zM3 177h16v13H3z" /><path d="M8 180l6 4-6 4z" fill="#3f4549" />
        <circle cx="25" cy="205" r="3.500" /><path d="M23 205h4" />
      </svg>
    </div>
  );
}

const HISTORY = [
  { id: 1, tone: 'bg-[#4c4f51] text-[#b9b9b9]' },
  { id: 2, tone: 'bg-[#55585a] text-[#dcdcdc]' },
  { id: 3, tone: 'bg-[#606264] text-white' },
];

function CommandLine() {
  return (
    <div className="absolute bottom-0 left-0 w-[845px] font-['DejaVu_Sans_Mono',monospace] text-[18px]">
      <ol className="mb-[5px] ml-[74px] flex flex-col items-start gap-[6px]">
        {HISTORY.map((line) => (
          <li key={line.id} className={`${line.tone} h-[23px] rounded-xs pr-[6px] pl-[2px] leading-[23px]`}>Comando: *Cancelar*</li>
        ))}
      </ol>
      <div className="flex h-[34px] border-t border-[#707070] bg-[#bbbcbe]">
        <div className="flex w-[67px] items-center bg-linear-to-b from-[#6a6a6a] to-[#3c3f41]">
          <svg viewBox="0 0 8 22" className="ml-1 h-[22px] w-2" aria-hidden="true">
            <path d="M1.500 0v22M5.500 0v22" stroke="#999" strokeWidth="2" strokeDasharray="2 2" />
          </svg>
          <button aria-label="Cerrar línea de comando" className="ml-[6px]">
            <svg viewBox="0 0 12 12" className="size-3"><path d="M1 1l10 10M11 1L1 11" stroke="#e8e8e8" strokeWidth="2.500" /></svg>
          </button>
          <button aria-label="Personalizar" className="ml-[13px]">
            <svg viewBox="0 0 20 20" className="size-[18px]"><path d="M1 3l4 3 2-3-3-3c5-1 8 3 7 7l9 9-4 4-9-10C3 10 0 7 1 3z" fill="#c4c7ca" stroke="#444" /></svg>
          </button>
        </div>
        <label htmlFor="command" className="flex items-center pl-[6px]">
          <span className="flex h-[18px] w-[18px] items-center justify-center rounded-xs border border-[#8d939c] bg-[#a6adb8]">
            <svg viewBox="0 0 14 14" className="size-[14px]"><path d="M2 3l4 4-4 4M8 11h5" stroke="#3b3f44" strokeWidth="1.500" fill="none" /></svg>
          </span>
          <Caret className="ml-[5px] w-[7px] text-[#555]" />
        </label>
        <input
          id="command"
          placeholder="Escriba un comando"
          className="ml-[9px] min-w-0 flex-1 bg-transparent italic placeholder:text-[#77787a]"
        />
        <button aria-label="Historial" className="mr-[6px]"><Caret className="w-[10px] rotate-180 text-[#222]" /></button>
      </div>
    </div>
  );
}

function UcsIcon() {
  return (
    <svg viewBox="0 0 100 90" className="pointer-events-none absolute bottom-0 left-0 h-[90px] w-[100px]" fill="none" stroke="#e6e6e6" aria-hidden="true">
      <path d="M20 3l6.500 7 6.500-7M26.500 10v6M18.500 20v46" />
      <path d="M14.500 65.500h9v10h-9zM18.500 70.500H69" stroke="#a3a5a6" />
      <path d="M73 56l13 11M86 56L73 67" strokeWidth="1.500" />
    </svg>
  );
}

function Canvas() {
  return (
    <main className="relative flex min-h-[600px] flex-1 justify-end bg-[#212830]">
      <div className="relative min-w-0 flex-1 overflow-hidden">
        <Drawing />
        <button className="absolute top-[5px] left-[2px] text-[11px] leading-[17px] text-white">[−][Superior][Estructura alámbrica 2D]</button>
        <div className="absolute top-[10px] right-[10px] flex gap-[9px]">
          <button aria-label="Minimizar dibujo"><svg viewBox="0 0 11 11" className="size-[11px]"><path d="M0 8h10" stroke="#f4f4f4" strokeWidth="3" /></svg></button>
          <button aria-label="Restaurar dibujo"><svg viewBox="0 0 11 11" className="size-[11px]"><path d="M1 4h6v6H1zM3 1h7v7" fill="none" stroke="#f4f4f4" strokeWidth="1.800" /></svg></button>
          <button aria-label="Cerrar ventana"><svg viewBox="0 0 11 11" className="size-[11px]"><path d="M1 1l8 8M9 1L1 9" stroke="#f4f4f4" strokeWidth="2.400" /></svg></button>
        </div>
        <ViewCube />
        <NavBar />
        <CommandLine />
        <UcsIcon />
      </div>
      <div className="flex w-[11px] shrink-0 bg-[#0c0f12]">
        <div className="flex w-2 flex-col border-r border-[#2f9fb0] bg-[#b7cfea]"><span className="h-[90px] bg-[#c6dbf2]" /></div>
      </div>
    </main>
  );
}

/* ---------- Status bar ---------- */

function LayoutTab({ label, width, active = false }: { label: string; width: string; active?: boolean }) {
  return (
    <button className={`${width} relative -ml-3 h-[23px] text-[14px] leading-[22px] ${active ? 'z-10 font-bold text-white' : 'text-[#b0b0b0]'}`}>
      <svg viewBox="0 0 120 23" preserveAspectRatio="none" className="absolute inset-0 size-full" aria-hidden="true">
        <path d="M0 0C12 2 8 23 20 23H98C112 23 106 2 120 0z" fill={active ? 'url(#tabActive)' : 'url(#tabIdle)'} />
      </svg>
      <span className="relative">{label}</span>
    </button>
  );
}

function StatusGroup({ width, children }: { width: string; children: ReactNode }) {
  return (
    <div className={`${width} flex h-8 shrink-0 items-center justify-evenly border border-[#858585] bg-[#4d4d4d]`}>{children}</div>
  );
}

function StatusBar() {
  return (
    <div className="flex h-[35px] border-t border-[#6b6b6b] bg-[#383838]">
      <div className="flex flex-1 pl-4">
        <LayoutTab label="Modelo" width="w-[100px]" active />
        <LayoutTab label="Presentación1" width="w-[133px]" />
        <LayoutTab label="Presentación2" width="w-[133px]" />
        <button aria-label="Nueva presentación" className="mt-[1px] flex h-5 w-7 items-center justify-center rounded-tl-xl rounded-br-xl rounded-bl-xs bg-[#525252]">
          <svg viewBox="0 0 10 10" className="size-[10px]"><path d="M5 0v10M0 5h10" stroke="#c4c4c4" strokeWidth="2" /></svg>
        </button>
      </div>
      <div className="flex gap-px text-[14px] text-white">
        <StatusGroup width="w-[73px]"><button>MODELO</button></StatusGroup>
        <StatusGroup width="w-[81px]">
          <button aria-label="Rejilla"><Icon20><path d="M3 1v18M7 1v18M11 1v18M15 1v18M1 4h18M1 8h18M1 12h18M1 16h18" stroke="#2d86e8" strokeWidth="1.500" /></Icon20></button>
          <button aria-label="Forzar cursor"><Icon20><path d="M1 2h18M1 6h18M1 10h18M1 14h18M1 18h18" stroke="#b5b5b5" strokeWidth="1.500" strokeDasharray="1 3" /></Icon20></button>
          <button aria-label="Ajustes de forzado"><Caret className="w-2" /></button>
        </StatusGroup>
        <StatusGroup width="w-[130px]">
          <button aria-label="Orto"><Icon20><path d="M2 1v17h17M2 12h6v6" stroke="#b5b5b5" strokeWidth="1.500" /></Icon20></button>
          <button aria-label="Rastreo polar"><Icon20><circle cx="9" cy="10" r="8" stroke="#2d86e8" strokeWidth="2" /><path d="M9 10h11M9 10l6-6" stroke="#2d86e8" strokeWidth="2" /></Icon20></button>
          <button aria-label="Ajustes polares"><Caret className="w-2" /></button>
          <button aria-label="Dibujo isométrico"><Icon20><path d="M10 0v20M0 1l20 17" stroke="#a5a5a5" strokeWidth="1.500" /></Icon20></button>
          <button aria-label="Isoplanos"><Caret className="w-2" /></button>
        </StatusGroup>
        <StatusGroup width="w-[80px]">
          <button aria-label="Rastreo de referencia"><Icon20><path d="M18 2L2 18h18" stroke="#2d86e8" strokeWidth="2" /><path d="M7 8h5v5H7z" fill="#2d86e8" /></Icon20></button>
          <button aria-label="Referencia a objetos"><Icon20><path d="M3 2h15v16H3z" stroke="#2d86e8" strokeWidth="2" /><rect x="1" y="0" width="6" height="6" fill="#0c8a16" stroke="#032" /></Icon20></button>
          <button aria-label="Ajustes de referencia"><Caret className="w-2" /></button>
        </StatusGroup>
        <StatusGroup width="w-[133px]">
          <button aria-label="Objetos de anotación"><Icon20><path d="M10 0l2 10 8 9-10-4-10 4 8-9z" fill="#2d8ff5" /><circle cx="15" cy="5" r="3.500" stroke="#2d8ff5" strokeWidth="1.500" /></Icon20></button>
          <button aria-label="Escalas automáticas"><Icon20><path d="M9 0l2 10 8 9-9-4-10 4 8-9z" fill="#bdbdbd" /><path d="M16 1l-4 6h3l-1 5 5-7h-3z" fill="#bdbdbd" /></Icon20></button>
          <button aria-label="Escala de anotación"><Icon20><path d="M10 0l2 10 8 9-10-4-10 4 8-9z" fill="#bdbdbd" /></Icon20></button>
          <button className="flex items-center gap-1">1:1<Caret className="w-2" /></button>
        </StatusGroup>
        <StatusGroup width="w-[51px]">
          <button aria-label="Espacio de trabajo"><Icon20><circle cx="10" cy="10" r="4.500" stroke="#bdbdbd" strokeWidth="3.500" /><circle cx="10" cy="10" r="7" stroke="#bdbdbd" strokeWidth="2.500" strokeDasharray="3 2.500" /></Icon20></button>
          <button aria-label="Lista de espacios"><Caret className="w-2" /></button>
        </StatusGroup>
        <StatusGroup width="w-[31px]"><button aria-label="Monitor de anotación"><Icon20><path d="M10 1v18M1 10h18" stroke="#c4c4c4" strokeWidth="2" /></Icon20></button></StatusGroup>
        <StatusGroup width="w-[32px]"><button aria-label="Aislar objetos"><Icon20><path d="M2 1h7v7H2zM9 11l4 8H5z" stroke="#bdbdbd" strokeWidth="1.500" /><circle cx="15" cy="8" r="4" stroke="#bdbdbd" strokeWidth="1.500" /></Icon20></button></StatusGroup>
        <StatusGroup width="w-[32px]"><button aria-label="Rendimiento de gráficos" className="flex size-[22px] items-center justify-center rounded-full border-2 border-[#2d86e8] bg-[#0a529c]"><span className="h-px w-2 -rotate-45 bg-[#7dbcff]" /></button></StatusGroup>
        <StatusGroup width="w-[30px]"><button aria-label="Normas"><Icon20><path d="M3 2h9l5 4v8H3z" fill="#dce6ee" /><path d="M10 4h6v6h-6z" fill="#3a76b8" /><path d="M2 13h10v5H2z" fill="#f2cf1f" /><path d="M2 2h3v9H2z" fill="#345" /><path d="M10 14l4 4 6-7" stroke="#3bb01f" strokeWidth="3" /></Icon20></button></StatusGroup>
        <StatusGroup width="w-[60px]">
          <button aria-label="Pantalla limpia"><Icon20><path d="M1 3h18v14H1z" stroke="#bdbdbd" strokeWidth="1.500" /><path d="M11 9l5-4M12 5h4v4M9 11l-5 4M4 11v4h4" stroke="#ddd" strokeWidth="1.500" /></Icon20></button>
          <button aria-label="Personalización"><Icon20><path d="M0 3h20M0 10h20M0 17h20" stroke="#c4c4c4" strokeWidth="2" /></Icon20></button>
        </StatusGroup>
      </div>
    </div>
  );
}

/* ---------- Taskbar ---------- */

const TASKS: { name: string; cell?: string; art: ReactNode }[] = [
  { name: 'Vista de tareas', art: <path d="M5 7v3h13V7M5 24v-3h13v3M5 12h13v7H5zM23 6v4M23 17v7M22 13h2" fill="none" stroke="#fff" strokeWidth="1.2" /> },
  { name: 'Optimizador', art: <><path d="M1 1h28v28H1z" fill="#14171b" stroke="#b8323a" strokeWidth="2" /><path d="M3 16h12v12H3z" fill="#1fa6a0" opacity=".5" /><circle cx="15" cy="15" r="6.500" fill="#2a2f33" stroke="#fff" strokeWidth="3" /><circle cx="15" cy="15" r="9" fill="none" stroke="#fff" strokeWidth="2" strokeDasharray="3 4" /><path d="M13 18l4-7" stroke="#fff" strokeWidth="2.500" /><path d="M13 0h4l-2 3zM13 30h4l-2-3z" fill="#fff" /></> },
  { name: 'Explorador', art: <><path d="M1 3h11l2 3H1z" fill="#d9a017" /><path d="M1 5h28v21H1z" fill="#f8cf5a" /><path d="M6 27V16h18v11h-5v-6h-8v6z" fill="#3f97d6" /></> },
  { name: 'Calculadora', art: <><path d="M4 0h22v30H4z" fill="#fff" /><path d="M6 2h18v5H6z" fill="#2b2b2b" /><path d="M7 11h3v3zM13 11h3v3zM20 11h3v3zM7 18h3v3zM13 18h3v3zM20 18h3v3zM7 25h3v3zM13 25h3v3zM20 25h3v3z" fill="#2b2b2b" /></> },
  { name: 'Antimalware', art: <><circle cx="15" cy="15" r="15" fill="#2a3f7c" /><circle cx="15" cy="15" r="8" fill="#0a0a0c" /><circle cx="15" cy="15" r="10" fill="none" stroke="#0a0a0c" strokeWidth="4" strokeDasharray="1.500 2.500" /><path d="M9 13l4 3h-3zM21 13l-4 3h3z" fill="#fff" /></> },
  { name: 'Acrobat', art: <><path d="M1 1h28v26H1z" fill="#d3120e" /><path d="M1 16h28v11H1z" fill="#8f0a08" opacity=".6" /><path d="M8 21c4-2 8-8 7-14-2-1-2 2 0 6s6 6 8 5-1-3-5-2-8 2-10 5z" fill="none" stroke="#fff" strokeWidth="1.400" /></> },
  { name: 'Spotify', art: <><circle cx="15" cy="15" r="14" fill="#1ed760" /><path d="M6 11c6-2 13-1 18 2M7 16c5-1 11-1 15 2M8 20c4-1 9-1 12 2" fill="none" stroke="#16211a" strokeWidth="2.200" strokeLinecap="round" /></> },
  { name: 'Excel', art: <><path d="M15 4h13v21H15z" fill="#fff" stroke="#1e7145" /><path d="M17 8h9M17 12h9M17 16h9M17 20h9M22 6v17" stroke="#1e7145" strokeWidth="1.500" /><path d="M1 4l16-3v28L1 26z" fill="#1e7145" /><text x="9" y="21" textAnchor="middle" fontSize="15" fontWeight="700" fill="#fff">X</text></> },
  { name: 'Chrome', cell: 'chrome', art: <><circle cx="15" cy="15" r="14" fill="#f8cb46" /><path d="M15 15L3 8a14 14 0 0 0 11 21l6-11z" fill="#1f9d58" /><path d="M3 8a14 14 0 0 1 25 1H15v6z" fill="#dd4b3e" /><circle cx="15" cy="15" r="6" fill="#4a84ee" stroke="#fff" strokeWidth="1.500" /></> },
  { name: 'Notas', art: <><path d="M3 3h23v23H3z" fill="#ffe500" /><path d="M15 26V15h11z" fill="#2a2a1a" /><path d="M26 15v11H15z" fill="#343332" /></> },
  { name: 'Word', art: <><path d="M15 4h12v21H15z" fill="#fff" stroke="#2a5699" /><path d="M17 8h9M17 12h9M17 16h9M17 20h9" stroke="#2a5699" strokeWidth="1.500" /><path d="M1 4l16-3v28L1 26z" fill="#2a5699" /><text x="9" y="20" textAnchor="middle" fontSize="12" fontWeight="700" fill="#fff">W</text></> },
  { name: 'AutoCAD', cell: 'autocad', art: <><path d="M0 0h30v30H0z" fill="#fbe9e4" /><path d="M5 25L12 4h6l7 21h-6l-1-4h-7l-2 4z" fill="#b5171b" /><path d="M15 9l3 8-6 1z" fill="#f3c9c4" /></> },
  { name: 'uTorrent', art: <><circle cx="15" cy="15" r="15" fill="#6db33f" /><path d="M5 9l5-1 2 9c1 4 6 3 6-1l-1-9 4-1 2 11c0 2 2 2 4 1l1 3c-3 2-7 2-8-1-2 3-5 3-7 2l2 7-5-1z" fill="#fff" /></> },
];

function Taskbar() {
  return (
    <footer className="flex h-[50px] items-center bg-linear-to-r from-[#24262a] via-[#343232] to-[#333333] text-white">
      <button aria-label="Inicio de Windows" className="flex w-[60px] shrink-0 justify-center">
        <svg viewBox="0 0 20 20" className="size-5"><path d="M0 3l8-1v8H0zM9 1.800L20 0v10H9zM0 11h8v8l-8-1zM9 11h11v9L9 18.500z" fill="#fff" /></svg>
      </button>
      <label className="flex h-[50px] w-[430px] shrink-0 items-center border border-[#c9c9c9] bg-[#f2f2f2] pl-[14px]">
        <svg viewBox="0 0 20 20" className="size-5 shrink-0"><circle cx="13" cy="7" r="6" fill="none" stroke="#111" strokeWidth="1.500" /><path d="M9 11l-8 8" stroke="#111" strokeWidth="1.500" /></svg>
        <input
          aria-label="Buscar en Windows"
          placeholder="Escribe aquí para buscar"
          className="ml-[15px] min-w-0 flex-1 bg-transparent text-[18px] placeholder:text-[#333]"
        />
      </label>
      <div className="flex h-full flex-1 pl-px">
        {TASKS.map((task) => (
          <button
            key={task.name}
            aria-label={task.name}
            className={`flex h-full w-[62px] flex-col items-center justify-between pt-[10px] ${task.cell === 'autocad' ? 'bg-[#5c5c5c]' : ''}`}
          >
            <svg viewBox="0 0 30 30" className="size-[30px]">{task.art}</svg>
            {task.cell && <span className={`h-[3px] bg-[#76b5e4] ${task.cell === 'autocad' ? 'w-full' : 'w-[52px]'}`} />}
          </button>
        ))}
      </div>
      <div className="flex h-full shrink-0 items-center pr-[6px] text-[14px]">
        <button aria-label="Iconos ocultos"><svg viewBox="0 0 16 10" className="h-[10px] w-4"><path d="M0 9l8-8 8 8" fill="none" stroke="#fff" strokeWidth="1.300" /></svg></button>
        <button aria-label="Red" className="ml-[14px]">
          <svg viewBox="0 0 18 18" className="size-[18px]" fill="none" stroke="#ddd" strokeWidth="1.3"><path d="M1 17C1 8 8 2 17 2M5 17c0-7 5-11 12-11M9 17c0-5 3-7 8-7" /><path d="M14 17c0-2 1-3 3-3" strokeWidth="3" /></svg>
        </button>
        <button aria-label="Volumen" className="ml-[9px]">
          <svg viewBox="0 0 20 20" className="size-5" fill="none" stroke="#fff" strokeWidth="1.3"><path d="M1 7h3l4-4v13l-4-4H1z" /><path d="M11 7c1 2 1 4 0 6" /><path d="M14 5c2 3 2 7 0 10M17 3c3 4 3 10 0 14" stroke="#8c8c8c" /></svg>
        </button>
        <button className="ml-[14px] w-[28px]">ESP</button>
        <button className="ml-[13px] w-[84px] text-center leading-[23px]">
          13:42
          <br />
          22-09-2019
        </button>
        <button aria-label="3 notificaciones" className="relative ml-[18px] size-[34px]">
          <svg viewBox="0 0 34 34" className="size-full"><path d="M1 5h20v16H12l-4 4v-4H1z" fill="#fff" /><path d="M4 9h14M4 13h14M4 17h9" stroke="#333" strokeWidth="1.300" /><circle cx="20" cy="24" r="10" fill="#3a3a3a" stroke="#9a9a9a" /></svg>
          <span className="absolute top-[14px] left-[15px] text-[14px] leading-[20px]">3</span>
        </button>
        <span className="ml-[10px] h-full w-px bg-[#777]" />
      </div>
    </footer>
  );
}

export default function App() {
  return (
    <div className="flex min-h-screen flex-col bg-[#212830] font-['Open_Sans','Segoe_UI',sans-serif]">
      <GradientDefs />
      <Header />
      <div className="flex border-b border-[#2b2b2b] bg-linear-to-b from-[#505050] to-[#3a3a3a]">
        <DrawPanel />
        <ModifyPanel />
        <AnnotationPanel />
        <LayersPanel />
        <BlockPanel />
        <PropertiesPanel />
        <GroupsPanel />
        <RightPanels />
      </div>
      <FileTabs />
      <Canvas />
      <StatusBar />
      <Taskbar />
    </div>
  );
}
